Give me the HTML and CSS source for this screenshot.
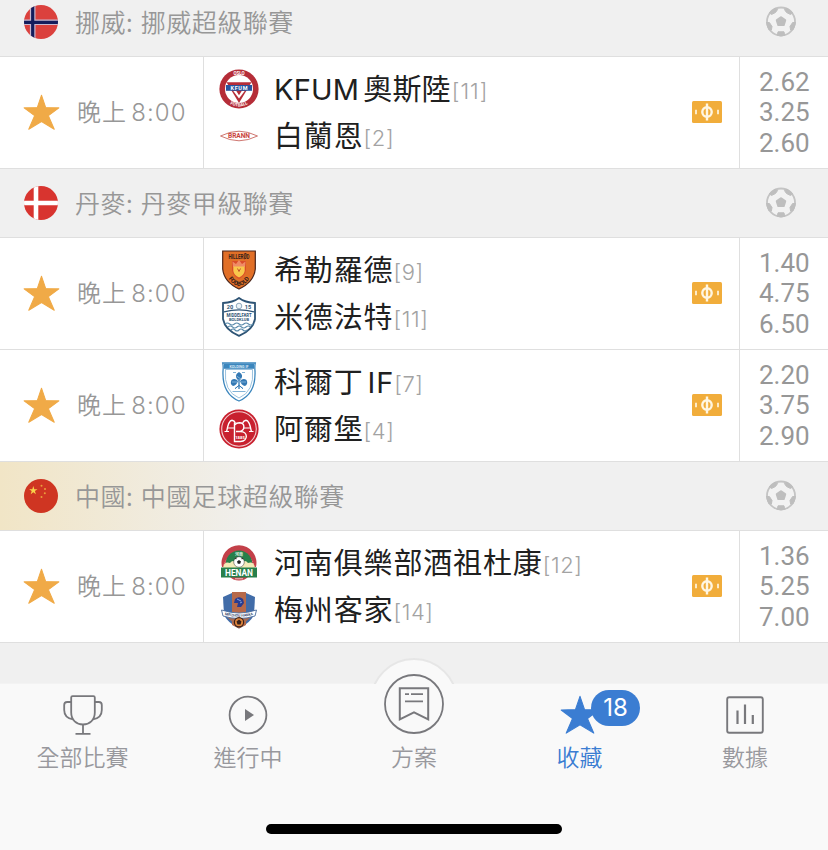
FILE: index.html
```html
<!DOCTYPE html>
<html lang="zh-Hant">
<head>
  <meta charset="UTF-8" />
  <meta name="viewport" content="width=device-width, initial-scale=1" />
  <title>收藏</title>
  <link rel="stylesheet" href="styles.css">
</head>
<body>
  <!-- SHARED ICONS -->
  <svg class="sprite" width="0" height="0">
    <symbol id="star" viewBox="0 0 36 36">
      <path d="M18 1.2 L22.1 13.2 L34.9 13.5 L24.7 21.1 L30.4 34.3 L18 26.7 L5.6 34.3 L11.3 21.1 L1.1 13.5 L13.9 13.2 Z" fill="currentColor" stroke="currentColor" stroke-width="1" stroke-linejoin="round" />
    </symbol>
    <symbol id="ball" viewBox="0 0 30 30">
      <clipPath id="ball-clip"><circle cx="15" cy="15" r="14.8" /></clipPath>
      <circle cx="15" cy="15" r="14" fill="#f2f2f2" stroke="#c4c4c4" stroke-width="1.8" />
      <g clip-path="url(#ball-clip)" fill="#bebebe" stroke="#bebebe" stroke-linejoin="round">
        <path d="M15 11 L19 13.8 L17.6 18.4 H12.4 L11 13.8 Z" stroke-width="2.4" />
        <path d="M7 1 L11.6 3 L9.5 6 L5.5 8 L3 6 Z" />
        <path d="M23 1 L18.4 3 L20.5 6 L24.5 8 L27 6 Z" />
        <path d="M0 16 L3.4 16 L6 20 L5.4 23.5 L1 23 Z" />
        <path d="M30 16 L26.6 16 L24 20 L24.6 23.5 L29 23 Z" />
        <path d="M12 25.3 H18 L19 30 H11 Z" />
      </g>
    </symbol>
    <symbol id="cash" viewBox="0 0 30 22">
      <rect width="30" height="22" rx="1.5" fill="#f1ad3b" />
      <g fill="none" stroke="#fff6e2" stroke-width="2.4">
        <circle cx="15" cy="11" r="4.7" />
        <path d="M15 2.5 V19.5" />
        <path d="M4 8.7 V13.3 M26 8.7 V13.3" stroke-width="1.7" />
      </g>
    </symbol>
  </svg>

  <main class="match-list">
    <div class="league">
      <svg class="flag" viewBox="0 0 34 34">
        <clipPath id="round"><circle cx="17" cy="17" r="17" /></clipPath>
        <g clip-path="url(#round)">
          <rect width="34" height="34" fill="#db413d" />
          <path d="M8.7 0 V34 M0 17.3 H34" stroke="#c9b8cf" stroke-width="5.6" />
          <path d="M8.7 0 V34 M0 17.3 H34" stroke="#141d5c" stroke-width="3.2" />
        </g>
      </svg>
      <span class="league-name">挪威: 挪威超級聯賽</span>
      <svg class="ball"><use href="#ball" /></svg>
    </div>

    <div class="match">
      <div class="match-time"><svg class="star"><use href="#star" /></svg><span>晚上<i></i>8:00</span></div>
      <div class="teams">
        <div class="team">
          <svg class="crest" viewBox="0 0 40 40">
            <circle cx="20" cy="20" r="19.6" fill="#b52d38" />
            <circle cx="20" cy="20" r="14" fill="#fff" />
            <path d="M7.5 13.3 H32.5 L20 34 Z" fill="#b52d38" />
            <path d="M14.3 22 H25.7 L20 29.5 Z" fill="#fff" />
            <path d="M17.3 22 H22.7 L20 26.3 Z" fill="#b52d38" />
            <rect x="7" y="16" width="26" height="5.8" fill="#2855a0" />
            <text x="20" y="21" class="crest-text" font-size="5.5" fill="#fff" textLength="17">KFUM</text>
            <text x="20" y="5.5" class="crest-text" font-size="4.5" fill="#fff" textLength="11">OSLO</text>
            <path id="kfum-arc" d="M7.5 32.2 A17.6 17.6 0 0 0 32.5 32.2" fill="none" />
            <text class="crest-text" font-size="4.4" fill="#fff"><textPath href="#kfum-arc" startOffset="50%">FOTBALL</textPath></text>
          </svg>
          <span class="team-name latin">KFUM<i></i>奧斯陸</span><span class="rank">[11]</span>
        </div>
        <div class="team">
          <svg class="crest" viewBox="0 0 40 40">
            <path d="M1.5 20 Q11 15.3 20 15.2 Q29 15.3 38.5 20 Q29 24.7 20 24.8 Q11 24.7 1.5 20 Z" fill="#fff" stroke="#cf7771" stroke-width="1" />
            <text x="20" y="22.4" class="crest-text" font-size="6.6" fill="#c9433c" textLength="22">BRANN</text>
          </svg>
          <span class="team-name">白蘭恩</span><span class="rank">[2]</span>
        </div>
      </div>
      <svg class="cash"><use href="#cash" /></svg>
      <div class="odds"><span>2.62</span><span>3.25</span><span>2.60</span></div>
    </div>

    <div class="league">
      <svg class="flag" viewBox="0 0 34 34">
        <g clip-path="url(#round)">
          <rect width="34" height="34" fill="#d8342f" />
          <path d="M12 0 V34 M0 17 H34" stroke="#fff" stroke-width="4.6" />
        </g>
      </svg>
      <span class="league-name">丹麥: 丹麥甲級聯賽</span>
      <svg class="ball"><use href="#ball" /></svg>
    </div>

    <div class="match">
      <div class="match-time"><svg class="star"><use href="#star" /></svg><span>晚上<i></i>8:00</span></div>
      <div class="teams">
        <div class="team">
          <svg class="crest" viewBox="0 0 40 40">
            <path d="M3.7 1 H36.3 V19 Q35 32 20 39 Q5 32 3.7 19 Z" fill="#e16f27" stroke="#4a241a" stroke-width="1.2" />
            <text x="20" y="8.8" class="crest-text" font-size="6.4" fill="#35201a" textLength="21" lengthAdjust="spacingAndGlyphs">HILLERØD</text>
            <path d="M13 11 H27 V20 Q26 26 20 29 Q14 26 13 20 Z" fill="#d94c2a" />
            <path d="M14 17 L13.5 11.5 L17 14 L20 10 L23 14 L26.5 11.5 L26 17 Z" fill="#ef8b66" />
            <path d="M14.3 16.5 H25.7 V21 Q25 25 20 27.5 Q15 25 14.3 21 Z" fill="#f9c74c" />
            <path d="M18.5 18.5 L20 21.5 L21.5 18.5" fill="none" stroke="#c4532a" />
            <path id="hil-arc" d="M7.5 25.5 Q12 34.5 20 36 Q28 34.5 32.5 25.5" fill="none" />
            <text class="crest-text" font-size="6" fill="#35201a"><textPath href="#hil-arc" startOffset="50%">FODBOLD</textPath></text>
          </svg>
          <span class="team-name">希勒羅德</span><span class="rank">[9]</span>
        </div>
        <div class="team">
          <svg class="crest" viewBox="0 0 40 40">
            <path d="M20 1 Q26 5.5 36 6 V22 Q34 33 20 38.8 Q6 33 4 22 V6 Q14 5.5 20 1 Z" fill="#fff" stroke="#2e5475" stroke-width="1.8" />
            <path d="M5 14.8 Q20 11 35 14.8" fill="none" stroke="#2e5475" stroke-width="1.3" />
            <circle cx="20" cy="9" r="2.8" fill="#edf3f7" stroke="#7797ae" stroke-width=".8" />
            <text x="11" y="12" class="crest-text" font-size="5.6" fill="#2e5475">20</text>
            <text x="29" y="12" class="crest-text" font-size="5.6" fill="#2e5475">15</text>
            <text x="20" y="19.8" class="crest-text" font-size="4.7" fill="#2e5475" textLength="25" lengthAdjust="spacingAndGlyphs">MIDDELFART</text>
            <text x="20" y="24.3" class="crest-text" font-size="4.4" fill="#2e5475" textLength="20" lengthAdjust="spacingAndGlyphs">BOLDKLUB</text>
            <path d="M6 27 q2.3 -2 4.7 0 t4.7 0 t4.7 0 t4.7 0 t4.7 0 t4.7 0 M9 30 q2.3 -2 4.5 0 t4.5 0 t4.5 0 t4.5 0 t4.5 0 M12 33 q2 -2 4 0 t4 0 t4 0 t4 0" fill="none" stroke="#5688a9" stroke-width="1.1" />
          </svg>
          <span class="team-name">米德法特</span><span class="rank">[11]</span>
        </div>
      </div>
      <svg class="cash"><use href="#cash" /></svg>
      <div class="odds"><span>1.40</span><span>4.75</span><span>6.50</span></div>
    </div>

    <div class="match">
      <div class="match-time"><svg class="star"><use href="#star" /></svg><span>晚上<i></i>8:00</span></div>
      <div class="teams">
        <div class="team">
          <svg class="crest" viewBox="0 0 40 40">
            <path d="M3.7 1 H36.3 Q35.5 4 36 9 Q37 32 20 39 Q3 32 4 9 Q4.5 4 3.7 1 Z" fill="#fff" stroke="#3b86bd" stroke-width="1.3" />
            <path d="M6.5 7.5 H33.5 Q35.5 29.5 20 36 Q4.5 29.5 6.5 7.5 Z" fill="none" stroke="#82b3d6" stroke-width=".8" />
            <rect x="5" y="1.6" width="30" height="5.2" fill="#3b86bd" />
            <text x="20" y="5.5" class="crest-text" font-size="3.6" fill="#dcebf6">KOLDING IF</text>
            <g fill="#3479b4">
              <path d="M20 10 Q25 13 22 17 L20 19 L18 17 Q15 13 20 10 Z" />
              <path d="M19 19 Q16 15.5 12.5 18 Q10.5 22 14 24 Q17.5 23.5 19 19 Z" />
              <path d="M21 19 Q24 15.5 27.5 18 Q29.5 22 26 24 Q22.5 23.5 21 19 Z" />
            </g>
            <path d="M20 17 V27 M16 27 L20 23 L24 27 M17.5 14 L22 17 M13 20 L18 20 M22 20 L27 20" fill="none" stroke="#7db1d8" stroke-width="1" />
            <path d="M20 18 V27 M16 26.5 L20 23.5 L24 26.5" fill="none" stroke="#3479b4" stroke-width="1" />
            <path d="M13.5 29.5 H26.5 M14 10.5 H17 M23 10.5 H26" stroke="#82b3d6" stroke-width="1" />
          </svg>
          <span class="team-name">科爾丁<i></i>IF</span><span class="rank">[7]</span>
        </div>
        <div class="team">
          <svg class="crest" viewBox="0 0 40 40">
            <circle cx="20" cy="20" r="19.6" fill="#c8202e" />
            <circle cx="20" cy="20" r="17.3" fill="none" stroke="#f3cdd0" stroke-width="1.1" />
            <g fill="none" stroke="#fff" stroke-width="1.4">
              <path d="M7.5 23 Q9.5 11.5 13 11.3 Q15.5 11.5 16.3 14 M32.5 23 Q30.5 11.5 27 11.3 Q24.5 11.5 23.7 14" />
              <path d="M5.5 22.5 H10 M30 22.5 H34.5 M8.5 19 H16 M24 19 H31.5" stroke-width="1.2" />
              <path d="M15.5 13.5 V32.5 H21.5 C29.5 32 29 22.5 21.5 22.5 H17 M17.5 22.5 H21 C26.5 21 26 14 20.5 13.8 Q17.5 13.8 15.5 16" />
            </g>
            <text x="21" y="29.6" class="crest-text" font-size="4.2" fill="#fff">1885</text>
          </svg>
          <span class="team-name">阿爾堡</span><span class="rank">[4]</span>
        </div>
      </div>
      <svg class="cash"><use href="#cash" /></svg>
      <div class="odds"><span>2.20</span><span>3.75</span><span>2.90</span></div>
    </div>

    <div class="league pinned">
      <svg class="flag" viewBox="0 0 34 34">
        <circle cx="17" cy="17" r="17" fill="#cf3522" />
        <path d="M9.3 7 L10.3 10.2 H13.5 L10.9 12.1 L11.9 15.3 L9.3 13.3 L6.7 15.3 L7.7 12.1 L5.1 10.2 H8.3 Z" fill="#f8d34a" />
        <g fill="#eaa13c">
          <circle cx="17.5" cy="6.8" r="1" /><circle cx="21" cy="10" r="1" /><circle cx="20.8" cy="14.2" r="1" /><circle cx="17.5" cy="18" r="1" />
        </g>
      </svg>
      <span class="league-name">中國: 中國足球超級聯賽</span>
      <svg class="ball"><use href="#ball" /></svg>
    </div>

    <div class="match">
      <div class="match-time"><svg class="star"><use href="#star" /></svg><span>晚上<i></i>8:00</span></div>
      <div class="teams">
        <div class="team">
          <svg class="crest" viewBox="0 0 40 40">
            <path d="M3 24 A17.5 17.5 0 1 1 37 24 Z" fill="#c34049" />
            <path d="M5 22 A15.5 15.5 0 0 1 35 22" fill="none" stroke="#e1949a" stroke-width="1" stroke-dasharray="1.2 1.2" />
            <path d="M7 23 A13.2 13.2 0 1 1 33 23 Z" fill="#27804b" />
            <text x="20" y="12.8" class="crest-text" font-size="4" fill="#dcefe0">河南</text>
            <path d="M4 25 Q5 18 11 20 Q14 16 17 20 H23 Q26 16 29 20 Q35 18 36 25 Z" fill="#f3eab7" />
            <circle cx="20" cy="19" r="5.3" fill="#fff" stroke="#333" stroke-width=".5" />
            <path d="M20 17 L22 18.5 L21.2 20.8 H18.8 L18 18.5 Z M15.3 16 L17.3 14.5 L17.6 16.2 Z M24.7 16 L22.7 14.5 L22.4 16.2 Z" fill="#222" />
            <path d="M10 33 H30 Q26 37.5 20 37.5 Q14 37.5 10 33 Z" fill="#c34049" />
            <path d="M16 35.8 H24" stroke="#f0c8cb" stroke-width="1" />
            <rect x="2" y="24.5" width="36" height="10" fill="#27804b" />
            <text x="20" y="32.5" class="crest-text" font-size="8.6" fill="#fff" textLength="28" lengthAdjust="spacingAndGlyphs">HENAN</text>
          </svg>
          <span class="team-name">河南俱樂部酒祖杜康</span><span class="rank">[12]</span>
        </div>
        <div class="team">
          <svg class="crest" viewBox="0 0 40 40">
            <path d="M4 7 L13 3 H27 L36 7 L35 25 Q31 33 20 38.5 Q9 33 5 25 Z" fill="#416ca8" />
            <path d="M13 2 H27 V35 L20 38.5 L13 35 Z" fill="#b6694a" />
            <path d="M8 27 L20 38 L32 27 Z" fill="#aa6b50" />
            <path d="M16 9 Q20 5.5 24 9 L25 13 L22 17 H18 L19 13 L15 13 Z" fill="#293c91" />
            <path d="M18 9 L22 11 M21 13 L23 12" stroke="#86a7dc" stroke-width="1" />
            <path d="M2.5 21 Q20 27 37.5 21 L36 27 Q20 32 4 27 Z" fill="#fff" stroke="#496c9d" stroke-width=".9" transform="translate(0 -1)" />
            <path id="mz-arc" d="M5 24.7 Q20 28.7 35 24.7" fill="none" />
            <text class="crest-text" font-size="3.6" fill="#33466b"><textPath href="#mz-arc" startOffset="50%">MEIZHOU HAKKA</textPath></text>
            <circle cx="20" cy="32.2" r="4.6" fill="#e0863c" stroke="#38211c" stroke-width="1.2" />
            <path d="M20 29.5 L22.5 31.4 L21.5 34.4 H18.5 L17.5 31.4 Z" fill="#38211c" />
          </svg>
          <span class="team-name">梅州客家</span><span class="rank">[14]</span>
        </div>
      </div>
      <svg class="cash"><use href="#cash" /></svg>
      <div class="odds"><span>1.36</span><span>5.25</span><span>7.00</span></div>
    </div>
  </main>

  <nav class="tab-bar">
    <div class="tabs">
      <a class="tab">
        <svg class="tab-icon" viewBox="0 0 40 40" fill="none" stroke="currentColor" stroke-width="1.8">
          <path d="M8.2 2.6 Q8.2 1.2 9.6 1.2 H30.4 Q31.8 1.2 31.8 2.6 V17.5 C31.8 25 26.5 29.5 20 29.5 C13.5 29.5 8.2 25 8.2 17.5 Z" />
          <path d="M8.2 7 H4.2 Q1.2 7 1.2 10 V15 Q1.2 23 10 24.3 M31.8 7 H35.8 Q38.8 7 38.8 10 V15 Q38.8 23 30 24.3 M20 29.5 V38.8 M12.5 38.8 H27.5" />
        </svg>
        <span>全部比賽</span>
      </a>
      <a class="tab">
        <svg class="tab-icon" viewBox="0 0 40 40">
          <circle cx="20" cy="20" r="18.4" fill="none" stroke="currentColor" stroke-width="1.8" />
          <path d="M17 14 L26 20 L17 26 Z" fill="currentColor" />
        </svg>
        <span>進行中</span>
      </a>
      <a class="tab plan">
        <svg class="tab-icon" viewBox="0 0 60 60" fill="none" stroke="currentColor">
          <circle cx="30" cy="30" r="29" stroke-width="1.8" />
          <path d="M15.8 14.2 H44.2 V45.3 L30 38.4 L15.8 45.3 Z" stroke-width="2" />
          <path d="M21 20.2 H25 M27 20.2 H39 M21 27.3 H39" stroke-width="1.8" />
        </svg>
        <span>方案</span>
      </a>
      <a class="tab active">
        <svg class="tab-icon"><use href="#star" /></svg>
        <b class="badge">18</b>
        <span>收藏</span>
      </a>
      <a class="tab">
        <svg class="tab-icon" viewBox="0 0 40 40" fill="none" stroke="currentColor" stroke-width="1.9">
          <rect x="2.2" y="2.2" width="35.6" height="35.6" rx="2" />
          <path d="M12.5 15.5 V29 M20 9.5 V29 M27.8 20 V29" stroke-width="2.2" />
        </svg>
        <span>數據</span>
      </a>
    </div>
    <div class="home-indicator"></div>
  </nav>
</body>
</html>
```
FILE: styles.css
```css
*,
*::before {
  box-sizing: border-box;
  margin: 0;
  padding: 0;
}

body {
  height: 850px;
  display: flex;
  flex-direction: column;
  overflow: hidden;
  background: #f0f0f0;
  color: #979797;
  font-family: Inter, "Noto Sans CJK TC", sans-serif;
}

svg {
  display: block;
  flex: none;
}

.sprite {
  position: absolute;
}

/* MATCH LIST */
.match-list {
  height: 683px;
  margin-top: -12px;
  flex: 1;
}

.league {
  height: 69px;
  display: flex;
  align-items: center;
  padding: 0 32px 1px 24px;
  border-bottom: 1px solid #dfdfdf;
}

.league.pinned {
  background: linear-gradient(90deg, #f1e5c6 0, #f0f0f0 270px);
}

.flag {
  width: 34px;
  height: 34px;
}

.league-name {
  flex: 1;
  margin-left: 17px;
  padding-bottom: 2px;
  font-family: "Noto Sans CJK TC", sans-serif;
  font-size: 25px;
  font-weight: 350;
  letter-spacing: 0.5px;
  word-spacing: 1.5px;
}

.ball {
  width: 30px;
  height: 31px;
}

.match {
  height: 112px;
  display: flex;
  align-items: center;
  background: #fff;
  border-bottom: 1px solid #dfdfdf;
}

.match-time {
  width: 204px;
  height: 100%;
  display: flex;
  align-items: center;
  padding-left: 23px;
  padding-bottom: 1px;
  border-right: 1px solid #dfdfdf;
  font-size: 24px;
  font-weight: 350;
  letter-spacing: 1.1px;
  white-space: nowrap;
}

.match-time span {
  padding-bottom: 3px;
}

.match-time i {
  display: inline-block;
  width: 4px;
}

.star {
  width: 37px;
  height: 37px;
  margin-right: 17px;
  color: #f0aa47;
}

.teams {
  flex: 1;
  padding-left: 15px;
}

.team {
  height: 47px;
  display: flex;
  align-items: center;
  white-space: nowrap;
}

.crest {
  width: 40px;
  height: 40px;
  margin-right: 15px;
}

.crest-text {
  font-family: Roboto, "Noto Sans CJK TC", sans-serif;
  font-weight: 700;
  text-anchor: middle;
}

.team-name {
  color: #202020;
  font-size: 29px;
  letter-spacing: 0.85px;
  line-height: 47px;
  padding-top: 1px;
}

.team-name.latin {
  letter-spacing: 0.2px;
}

.team-name i {
  display: inline-block;
  width: 4px;
}

.rank {
  color: #a3a3a3;
  font-size: 22px;
  font-weight: 350;
  letter-spacing: 0.6px;
  line-height: 47px;
  padding-top: 4px;
}

.latin + .rank {
  margin-left: 1px;
  letter-spacing: 1px;
}

.cash {
  width: 30px;
  height: 22px;
  margin: 0 17px 2px 0;
}

.odds {
  width: 89px;
  height: 100%;
  display: flex;
  flex-direction: column;
  justify-content: center;
  padding-left: 19px;
  border-left: 1px solid #dfdfdf;
  font-family: Roboto, sans-serif;
  font-size: 26px;
  line-height: 30.5px;
}

/* TAB BAR */
.tab-bar {
  position: relative;
  height: 167px;
  flex: none;
  display: flex;
  flex-direction: column;
  justify-content: space-between;
  align-items: center;
  padding-bottom: 16px;
  background: #f9f9f9;
  border-top: 1px solid #f3f3f3;
  color: #78787c;
}

.tabs {
  width: 100%;
  display: grid;
  grid-template-columns: 165px 166px 166px 165px 166px;
}

.tab {
  position: relative;
  display: flex;
  flex-direction: column;
  align-items: center;
  padding-top: 11px;
}

.tab span {
  margin-top: 5px;
  color: #98989d;
  font-family: "Noto Sans CJK TC", sans-serif;
  font-size: 23px;
  font-weight: 350;
  line-height: 32px;
}

.tab-icon {
  width: 40px;
  height: 40px;
}

/* raised middle tab, its round back sticks out over the list */
.plan {
  padding-top: 0;
}

.plan::before {
  content: '';
  position: absolute;
  top: -26px;
  width: 88px;
  height: 88px;
  border: 2px solid #e6e6e6;
  border-radius: 50%;
  background: #f9f9f9;
  clip-path: inset(0 0 62px 0);
}

.plan .tab-icon {
  position: relative;
  width: 60px;
  height: 60px;
  margin-top: -10px;
}

.plan span {
  margin-top: 6px;
}

.tab.active,
.tab.active span {
  color: #3b7dd2;
}

.badge {
  position: absolute;
  top: 6px;
  left: 94px;
  width: 49px;
  height: 36px;
  border-radius: 18px;
  background: #3b7dd2;
  color: #fff;
  font-size: 24px;
  font-weight: 400;
  line-height: 36px;
  text-align: center;
}

.home-indicator {
  width: 296px;
  height: 10px;
  border-radius: 5px;
  background: #000;
}
```
